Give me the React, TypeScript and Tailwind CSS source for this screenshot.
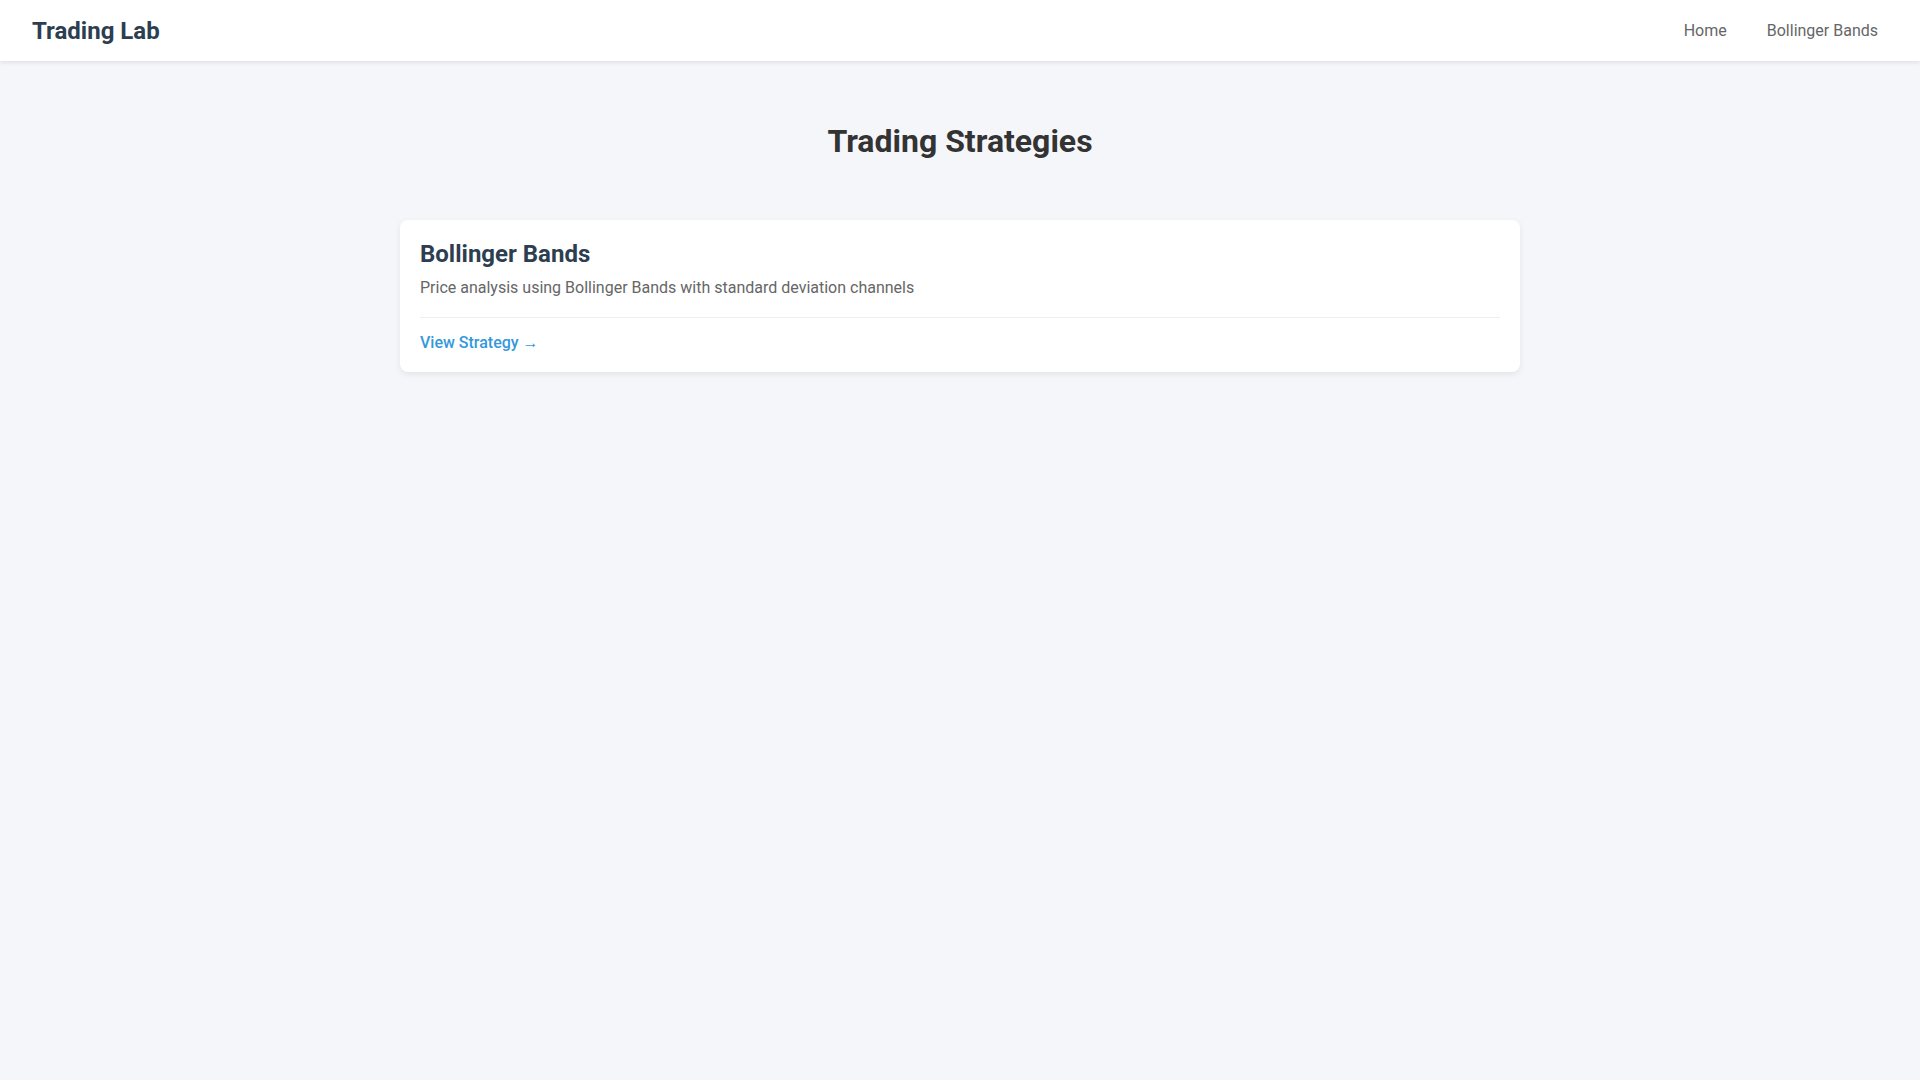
export default function App() {
  const strategies = [
    {
      name: "Bollinger Bands",
      description: "Price analysis using Bollinger Bands with standard deviation channels",
    },
  ];

  return (
    <div className="min-h-screen bg-[#f5f6fa] font-['Roboto',sans-serif]">
      {/* Header */}
      <header className="flex h-[61px] items-center justify-between bg-white pl-8 pr-[34px] shadow-[0_2px_4px_rgba(0,0,0,0.08)]">
        <h1 className="text-2xl font-bold leading-none text-[#2c3e50]">Trading Lab</h1>
        <nav className="flex items-center gap-6">
          <a href="#" className="px-2 text-base text-[#666]">
            Home
          </a>
          <a href="#" className="px-2 text-base text-[#666]">
            Bollinger Bands
          </a>
        </nav>
      </header>

      {/* Main */}
      <main className="mx-auto w-[1120px] pt-[61px]">
        <h2 className="mb-[60px] text-center text-[32px] font-bold leading-[1.2] text-[#333]">
          Trading Strategies
        </h2>
        <div className="flex flex-col gap-5">
          {strategies.map((s) => (
            <div
              key={s.name}
              className="rounded-lg bg-white px-5 pb-[17px] pt-5 shadow-[0_2px_6px_rgba(0,0,0,0.08)]"
            >
              <h3 className="text-2xl font-bold leading-[1.2] text-[#2c3e50]">{s.name}</h3>
              <p className="mt-[7px] text-base leading-6 text-[#666]">{s.description}</p>
              <div className="mt-[17px] border-t border-[#eee] pt-[13px]">
                <a href="#" className="text-base font-medium leading-6 text-[#3498db]">
                  View Strategy →
                </a>
              </div>
            </div>
          ))}
        </div>
      </main>
    </div>
  );
}
